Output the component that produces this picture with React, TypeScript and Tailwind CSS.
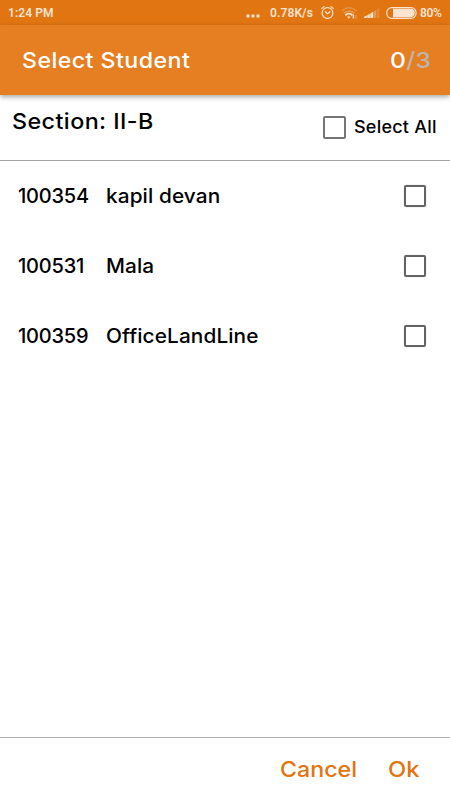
import clsx from "clsx";

interface Student {
  id: string;
  name: string;
}

const STUDENTS: Student[] = [
  { id: "100354", name: "kapil devan" },
  { id: "100531", name: "Mala" },
  { id: "100359", name: "OfficeLandLine" },
];

function Checkbox({ label, large }: { label: string; large?: boolean }) {
  return (
    <button
      type="button"
      role="checkbox"
      aria-checked={false}
      aria-label={label}
      className={clsx(
        "shrink-0 rounded-[2px] border-2",
        large
          ? "size-[23px] border-[#757575]"
          : "size-[22px] border-[#636363] shadow-[0_0_1px_rgba(0,0,0,0.4)]",
      )}
    />
  );
}

function StatusBar() {
  return (
    <div className="flex h-[25px] shrink-0 items-center bg-[#e17512] pr-[9px] pl-2 font-[Roboto,sans-serif] text-[12px] font-semibold text-[#fbe3cf]">
      <span className="tracking-[0.1px]">1:24 PM</span>
      <svg className="ml-auto" width="14" height="25" viewBox="0 0 14 25">
        <circle cx="2" cy="16" r="1.7" fill="currentColor" />
        <circle cx="7" cy="16" r="1.7" fill="currentColor" />
        <circle cx="12" cy="16" r="1.7" fill="currentColor" />
      </svg>
      <span className="ml-[10px] w-[44px] tracking-[0.1px] whitespace-nowrap">
        0.78K/s
      </span>
      {/* Alarm clock */}
      <svg
        className="ml-[7px]"
        width="14"
        height="15"
        viewBox="0 0 14 15"
        fill="none"
        stroke="currentColor"
        strokeWidth="1.2"
        strokeLinecap="round"
      >
        <circle cx="6.5" cy="8" r="5.4" />
        <path d="M0.8 3.4L3 1.6M12.2 3.4L10 1.6M4.3 6.8L6.5 8.8L9.1 6.8" />
      </svg>
      {/* Wifi, weak signal */}
      <svg
        className="ml-[6px]"
        width="17"
        height="14"
        viewBox="0 0 17 14"
        fill="none"
        stroke="currentColor"
        strokeWidth="1.5"
      >
        <path d="M0.8 5C4.8 0.6 11.4 0.6 15.4 5" opacity="0.25" />
        <path d="M2.8 7.3C5.8 4.4 10.4 4.4 13.4 7.3" opacity="0.35" />
        <path d="M4.4 9.4C6.4 7 9.6 7 11.4 9.4" strokeWidth="1.8" />
        <path d="M6 10.6H9.6L7.8 12.8Z" fill="currentColor" stroke="none" />
        <path d="M12.4 8.6V12.6" strokeWidth="1.3" />
        <path d="M15 9V13" strokeWidth="1.2" opacity="0.35" />
      </svg>
      {/* Mobile signal */}
      <svg
        className="ml-[6px]"
        width="16"
        height="12"
        viewBox="0 0 16 12"
        fill="currentColor"
      >
        <path d="M0 11V9.8L2.8 8.5V11ZM3.3 11V8.2L5.8 6.8V11ZM6.3 11V6.5L9.2 4.8V11Z" />
        <path d="M9.8 11V4.4L12.2 3V11Z" opacity="0.35" />
        <path d="M12.8 11V2.6L15.4 1V11Z" opacity="0.18" />
      </svg>
      {/* Battery */}
      <svg
        className="ml-[6px]"
        width="31"
        height="12"
        viewBox="0 0 31 12"
        fill="none"
      >
        <rect
          x="0.7"
          y="0.7"
          width="29.4"
          height="10.6"
          rx="5"
          stroke="currentColor"
          strokeWidth="1.2"
        />
        <path d="M7 1.8H25C30 1.8 30 10.2 25 10.2H7Z" fill="currentColor" />
      </svg>
      <span className="ml-[3px] w-[21px] tracking-[-0.4px] whitespace-nowrap">
        80%
      </span>
    </div>
  );
}

export default function App() {
  return (
    <div className="flex h-[800px] w-[450px] flex-col overflow-hidden bg-white font-[Inter,sans-serif] font-medium text-black">
      <StatusBar />
      <header className="z-10 flex h-[70px] shrink-0 items-center justify-between bg-[#e67e22] pr-[18px] pl-[22px] text-[22px] text-white shadow-[0_2px_5px_rgba(0,0,0,0.35)]">
        <h1 className="origin-left scale-x-[1.055] tracking-[0.4px]">
          Select Student
        </h1>
        <span className="w-[42px] origin-left scale-x-[1.12] tracking-[0.2px] whitespace-nowrap">
          0<span className="text-[#bdb5ac]">/3</span>
        </span>
      </header>

      <section className="flex h-[66px] shrink-0 items-center justify-between border-b border-[#a3a3a3] pl-[12px]">
        <h2 className="mb-[13px] origin-left scale-x-[1.06] text-[22px] tracking-[0.4px]">
          Section: II-B
        </h2>
        <div className="flex items-center">
          <Checkbox label="Select All" large />
          <span className="ml-[8px] w-[96px] origin-left scale-x-[1.06] text-[17px] tracking-[0.2px] whitespace-nowrap">
            Select All
          </span>
        </div>
      </section>

      <ul className="flex-1">
        {STUDENTS.map((student) => (
          <li
            key={student.id}
            className="flex h-[70px] items-center pr-[24px] pl-[18px] text-[20px]"
          >
            <span className="w-[88px] tracking-[-0.2px]">{student.id}</span>
            <span className="origin-left scale-x-[1.04] tracking-[0.1px]">
              {student.name}
            </span>
            <div className="ml-auto flex">
              <Checkbox label={student.name} />
            </div>
          </li>
        ))}
      </ul>

      <footer className="flex h-[63px] shrink-0 items-center border-t border-[#b0b0b0] pl-[280px] text-[22px] text-[#e17512]">
        <button
          type="button"
          className="w-[108px] origin-left scale-x-[1.055] text-left"
        >
          Cancel
        </button>
        <button type="button" className="origin-left scale-x-[1.08] text-left">
          Ok
        </button>
      </footer>
    </div>
  );
}
